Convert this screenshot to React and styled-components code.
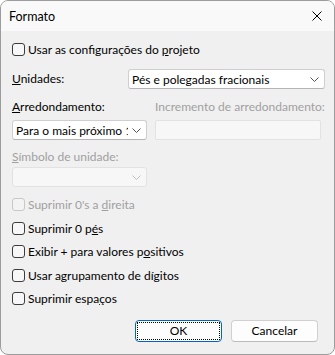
import React from 'react'
import styled, { createGlobalStyle } from 'styled-components'

const Global = createGlobalStyle`
  html, body {
    margin: 0;
    padding: 0;
    background: #ffffff;
  }
  body {
    font-family: Lato, "Noto Sans", sans-serif;
    font-size: 12px;
    color: #000;
  }
`

const Window = styled.div`
  width: 335px;
  height: 355px;
  box-sizing: border-box;
  border: 1px solid #9c9c9c;
  border-radius: 8px;
  overflow: hidden;
  background: #f0f0f0;
  display: flex;
  flex-direction: column;
`

const TitleBar = styled.div`
  height: 30px;
  flex: none;
  background: #f9f9f9;
  display: flex;
  align-items: center;
  justify-content: space-between;
  padding: 0 12px 0 8px;
  font-size: 12.5px;
`

const Body = styled.div`
  flex: 1;
  padding: 8px 11px 0 11px;
  display: flex;
  flex-direction: column;
`

const CheckRow = styled.label`
  height: ${p => (p.tall ? '23.5px' : '20px')};
  display: flex;
  align-items: center;
  gap: 3px;
  color: ${p => (p.disabled ? '#a0a0a0' : '#000')};
`

const Box = styled.span`
  width: 11px;
  height: 11px;
  border: 1px solid ${p => (p.disabled ? '#c8c8c8' : '#3c3c3c')};
  border-radius: 3px;
  background: ${p => (p.disabled ? '#f3f3f3' : '#f7f7f7')};
  flex: none;
`

const Row = styled.div`
  display: grid;
  grid-template-columns: ${p => p.cols};
  column-gap: 8px;
  align-items: center;
  margin-top: ${p => p.top || 0}px;
`

const Label = styled.div`
  height: 16px;
  line-height: 16px;
  color: ${p => (p.disabled ? '#a0a0a0' : '#000')};
  white-space: nowrap;
`

const Select = styled.div`
  height: 20px;
  box-sizing: border-box;
  border: 1px solid ${p => (p.disabled ? '#e2e2e2' : '#cfcfcf')};
  border-bottom-color: ${p => (p.disabled ? '#e2e2e2' : '#b5b5b5')};
  border-radius: 3px;
  background: ${p => (p.disabled ? '#f7f7f7' : '#ffffff')};
  display: flex;
  align-items: center;
  padding: 0 5px 0 3px;
  gap: 4px;
  overflow: hidden;
`

const Value = styled.span`
  flex: 1;
  min-width: 0;
  white-space: pre;
  overflow: hidden;
`

const Chevron = ({ color }) => (
  <svg width="9" height="5" viewBox="0 0 9 5" style={{ flex: 'none' }}>
    <path d="M0.5 0.5 L4.5 4.5 L8.5 0.5" fill="none" stroke={color} strokeWidth="1" />
  </svg>
)

const Input = styled.div`
  height: 20px;
  box-sizing: border-box;
  border: 1px solid #e2e2e2;
  border-radius: 2px;
  background: #f7f7f7;
`

const Checks = styled.div`
  margin-top: 6px;
  display: flex;
  flex-direction: column;
`

const Buttons = styled.div`
  margin-top: 9px;
  display: flex;
  justify-content: flex-end;
  gap: 9px;
  padding-right: 5px;
`

const Button = styled.button`
  position: relative;
  width: 87px;
  height: 22px;
  box-sizing: border-box;
  border: 1px solid ${p => (p.primary ? '#0067c0' : '#d0d0d0')};
  border-bottom-color: ${p => (p.primary ? '#0067c0' : '#bcbcbc')};
  border-radius: 4px;
  background: #fdfdfd;
  font-family: inherit;
  font-size: 12px;
  color: #000;
  padding: 0;
  &::after {
    content: ${p => (p.primary ? "''" : 'none')};
    position: absolute;
    inset: 1px;
    border: 1px dotted #000;
  }
`

const u = ch => <u>{ch}</u>

function Check({ disabled, children }) {
  return (
    <CheckRow tall disabled={disabled}>
      <Box disabled={disabled} />
      <span>{children}</span>
    </CheckRow>
  )
}

export default function App() {
  return (
    <>
      <Global />
      <Window>
        <TitleBar>
          <span>Formato</span>
          <svg width="10" height="10" viewBox="0 0 10 10">
            <path d="M0.5 0.5 L9.5 9.5 M9.5 0.5 L0.5 9.5" stroke="#000" strokeWidth="1" />
          </svg>
        </TitleBar>
        <Body>
          <CheckRow>
            <Box />
            <span>Usar as configurações do {u('p')}rojeto</span>
          </CheckRow>
          <Row cols="108px 197px" top={10}>
            <Label>{u('U')}nidades:</Label>
            <Select>
              <Value>Pés e polegadas fracionais</Value>
              <Chevron color="#555" />
            </Select>
          </Row>
          <Row cols="135px 166px" top={10}>
            <Label>{u('A')}rredondamento:</Label>
            <Label disabled>Incremento de arredondamento:</Label>
          </Row>
          <Row cols="135px 166px" top={5}>
            <Select>
              <Value>Para o mais próximo 1/2"</Value>
              <Chevron color="#555" />
            </Select>
            <Input />
          </Row>
          <Row cols="135px 166px" top={9}>
            <Label disabled>{u('S')}ímbolo de unidade:</Label>
          </Row>
          <Row cols="135px 166px" top={2}>
            <Select disabled>
              <Value />
              <Chevron color="#c0c0c0" />
            </Select>
          </Row>
          <Checks>
            <Check disabled>Suprimir 0's a {u('d')}ireita</Check>
            <Check>Suprimir 0 p{u('é')}s</Check>
            <Check>Exibir + para valores p{u('o')}sitivos</Check>
            <Check>Usar agrupamento de dí{u('g')}itos</Check>
            <Check>Suprimir espa{u('ç')}os</Check>
          </Checks>
          <Buttons>
            <Button primary>OK</Button>
            <Button>Cancelar</Button>
          </Buttons>
        </Body>
      </Window>
    </>
  )
}
